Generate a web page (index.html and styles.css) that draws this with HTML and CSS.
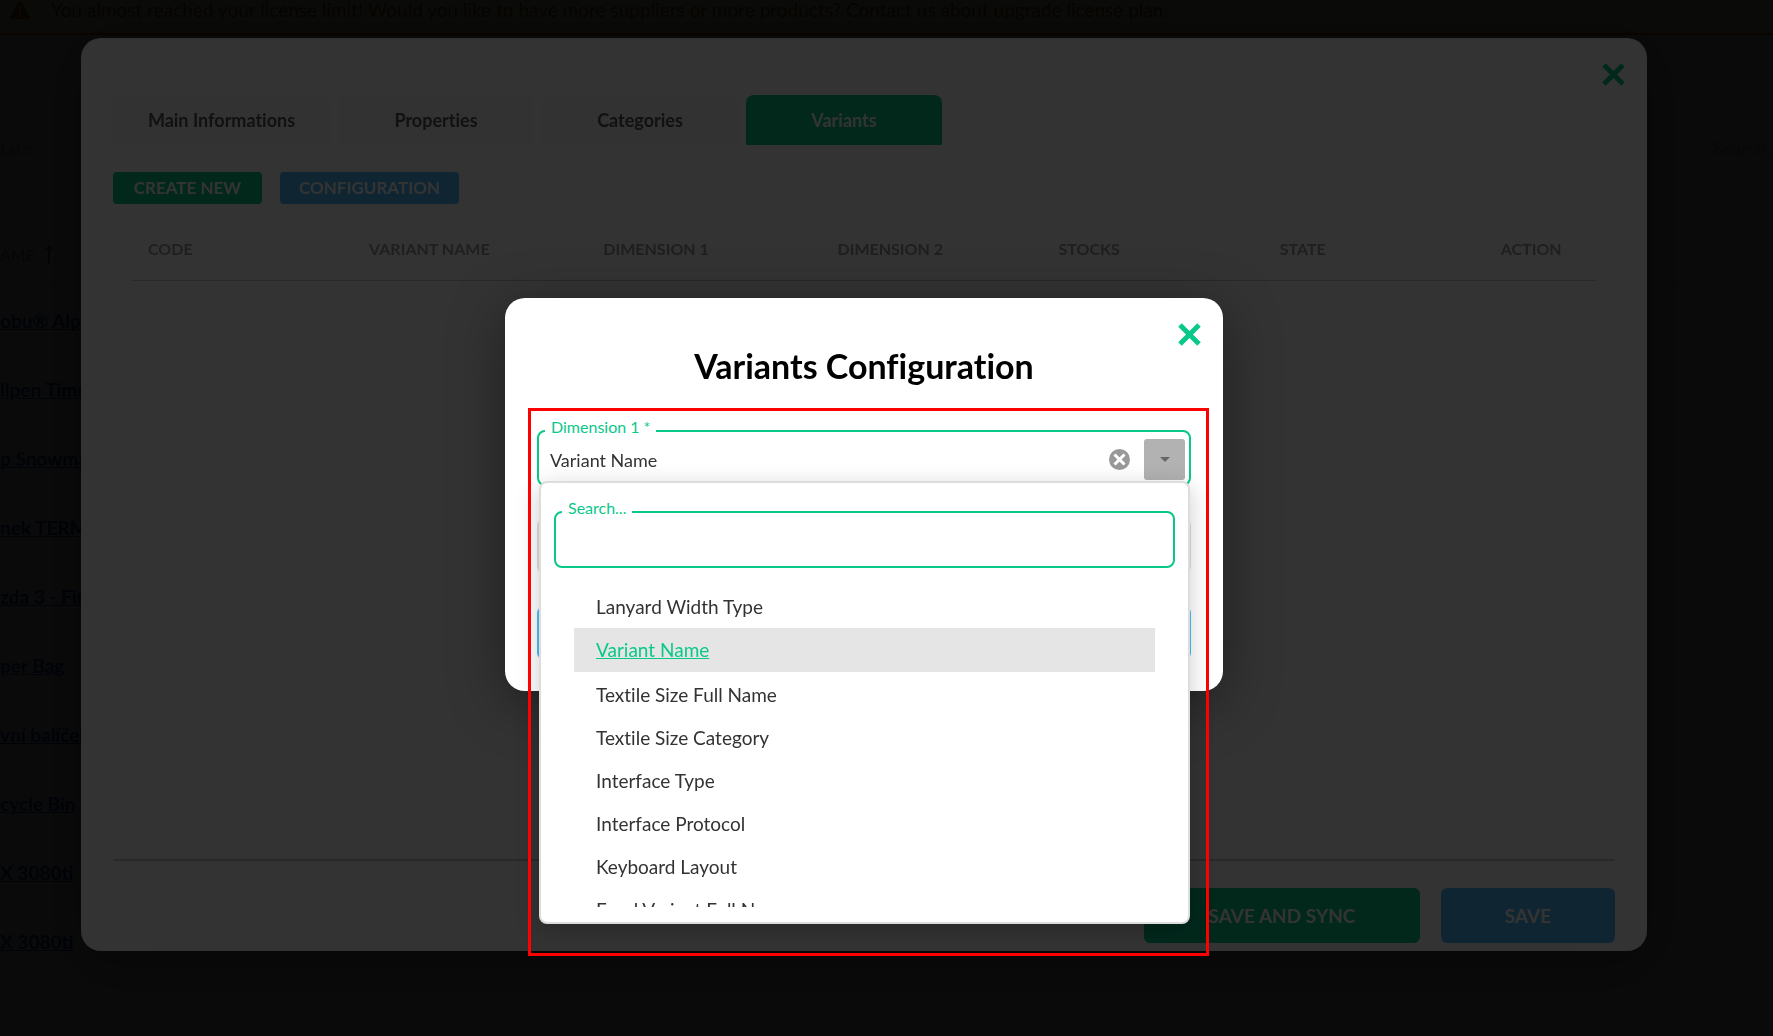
FILE: index.html
```
<!DOCTYPE html>
<html lang="en">
<head>
<meta charset="utf-8">
<meta name="viewport" content="width=device-width, initial-scale=1">
<title>Variants Configuration</title>
<link rel="stylesheet" href="styles.css">
</head>
<body>
<div class="page">
  <div class="license-banner">
    <svg class="warn-icon" viewBox="0 0 20 18" aria-hidden="true"><path fill-rule="evenodd" d="M10 0c.6 0 1 .3 1.300.8l8.500 14.700c.6 1.100-.1 2.500-1.400 2.500H1.600c-1.300 0-2-1.400-1.400-2.500L8.700.8C9 .3 9.400 0 10 0zM9 5.500l.3 6h1.400l.3-6zM10 13a1.200 1.200 0 1 0 0 2.400 1.200 1.200 0 0 0 0-2.400z"/></svg>
    <span>You almost reached your license limit! Would you like to have more suppliers or more products? Contact us about upgrade license plan.</span>
  </div>
  <div class="page-bar"></div>
  <div class="filters">
    <span class="filter-state">tate</span>
    <input class="filter-search" type="search" placeholder="Search..." aria-label="Search products">
  </div>
  <div class="products">
    <div class="products-head">AME
      <svg class="sort-icon" viewBox="0 0 8 20" aria-hidden="true"><path d="M4 1v18M1 5l3-4 3 4"/></svg>
    </div>
    <a class="product" href="#">obu® Alpine</a>
    <a class="product" href="#">llpen Timmy</a>
    <a class="product" href="#">p Snowman</a>
    <a class="product" href="#">nek TERMO</a>
    <a class="product" href="#">zda 3 - First</a>
    <a class="product" href="#">per Bag</a>
    <a class="product" href="#">vní balíček</a>
    <a class="product" href="#">cycle Bin</a>
    <a class="product" href="#">X 3080ti</a>
    <a class="product" href="#">X 3080ti</a>
  </div>
</div>

<div class="overlay">
  <section class="dialog product-dialog" aria-label="Product">
    <button class="close" type="button" aria-label="Close">
      <svg viewBox="0 0 23 23" aria-hidden="true"><path d="M2 2l19 19M21 2L2 21"/></svg>
    </button>
    <nav class="tabs">
      <button class="tab" type="button">Main Informations</button>
      <button class="tab" type="button">Properties</button>
      <button class="tab" type="button">Categories</button>
      <button class="tab tab-active" type="button">Variants</button>
    </nav>
    <div class="toolbar">
      <button class="tool tool-create green" type="button">CREATE NEW</button>
      <button class="tool tool-config blue" type="button">CONFIGURATION</button>
    </div>
    <table class="variants">
      <colgroup><col class="c-mid"><col class="c-wide"><col class="c-wide"><col class="c-mid"><col class="c-mid"><col class="c-mid"><col></colgroup>
      <thead>
        <tr><th>CODE</th><th>VARIANT NAME</th><th>DIMENSION 1</th><th>DIMENSION 2</th><th>STOCKS</th><th>STATE</th><th>ACTION</th></tr>
      </thead>
    </table>
    <footer class="dialog-footer">
      <button class="save save-sync green" type="button">SAVE AND SYNC</button>
      <button class="save blue" type="button">SAVE</button>
    </footer>
  </section>
</div>

<div class="overlay overlay-center">
  <section class="dialog config-dialog" role="dialog" aria-labelledby="config-title">
    <button class="close" type="button" aria-label="Close">
      <svg viewBox="0 0 23 23" aria-hidden="true"><path d="M2 2l19 19M21 2L2 21"/></svg>
    </button>
    <h1 id="config-title" class="config-title">Variants Configuration</h1>
    <div class="field">
      <label class="field-label" for="dim1">Dimension 1 *</label>
      <input id="dim1" class="field-input" type="text" value="Variant Name" readonly>
      <button class="clear" type="button" aria-label="Clear">
        <svg viewBox="0 0 21 21" aria-hidden="true"><circle cx="10.500" cy="10.500" r="10.500"/><path d="M5.500 5.500l10 10M15.500 5.500l-10 10"/></svg>
      </button>
      <button class="toggle" type="button" aria-label="Open list">
        <svg viewBox="0 0 10 5" aria-hidden="true"><path d="M0 0h10L5 5z"/></svg>
      </button>
      <div class="dropdown">
        <div class="field search">
          <label class="field-label" for="find">Search...</label>
          <input id="find" class="field-input" type="text">
        </div>
        <ul class="options" role="listbox" aria-label="Dimension 1">
          <li role="option">Lanyard Width Type</li>
          <li role="option" class="selected" aria-selected="true">Variant Name</li>
          <li role="option">Textile Size Full Name</li>
          <li role="option">Textile Size Category</li>
          <li role="option">Interface Type</li>
          <li role="option">Interface Protocol</li>
          <li role="option">Keyboard Layout</li>
          <li role="option">Food Variant Full Name</li>
        </ul>
      </div>
    </div>
    <div class="field field-idle">
      <input class="field-input" type="text" aria-label="Second dimension">
    </div>
    <button class="confirm blue" type="button" aria-label="Save"></button>
    <div class="highlight"></div>
  </section>
</div>
</body>
</html>
```
FILE: styles.css
```
* { box-sizing: border-box; }
body {
  margin: 0;
  min-height: 100vh;
  overflow: hidden;
  background: #fafafa;
  color: #333;
  font: 18px/24px Lato, "Noto Sans", sans-serif;
  font-variant-ligatures: none;
}
button, input { font: inherit; font-variant-ligatures: none; color: inherit; }
button { border: 0; padding: 0; cursor: pointer; }
.green { background: #0ac88a; }
.blue { background: #4bbff7; }

/* Product list behind the dialogs */
.page { height: 100vh; overflow: hidden; }
.license-banner {
  display: flex;
  align-items: center;
  gap: 21px;
  height: 35px;
  padding: 0 10px 14px;
  border-bottom: 2px solid #f57c00;
  background: #fffbe0;
  color: #9c6200;
  font-size: 19px;
  line-height: 19px;
}
.warn-icon { width: 20px; height: 20px; fill: #b56c00; }
.page-bar { height: 28px; border-bottom: 1px solid #eee; }
.filters {
  display: flex;
  justify-content: space-between;
  align-items: center;
  height: 169px;
}
.filter-state { color: #aaa; }
.filter-search {
  width: 120px;
  height: 58px;
  margin-right: -45px;
  padding: 0 14px;
  border: 1px solid #ddd;
  border-radius: 6px;
  background: #fff;
}
.filter-search::placeholder { color: #aaa; }
.products-head {
  display: flex;
  align-items: center;
  gap: 10px;
  height: 55px;
  padding-bottom: 8px;
  border-bottom: 1px solid #ddd;
  font-size: 16px;
  color: #888;
}
.sort-icon { width: 8px; height: 20px; fill: none; stroke: #666; stroke-width: 2; }
.product {
  display: block;
  height: 69px;
  line-height: 68px;
  border-bottom: 1px solid #eee;
  color: #0048b4;
  font-size: 19px;
  font-weight: 700;
  text-decoration: underline;
}

/* Dialogs */
.overlay {
  position: fixed;
  inset: 0;
  display: flex;
  padding: 38px 126px 85px 81px;
  background: rgba(0, 0, 0, .8);
}
.overlay-center { align-items: center; justify-content: center; }
.dialog {
  position: relative;
  display: flex;
  flex-direction: column;
  border-radius: 20px;
  background: #fff;
  box-shadow: 0 12px 56px rgba(0, 0, 0, .38);
}
.close {
  position: absolute;
  top: 25px;
  right: 22px;
  width: 23px;
  height: 23px;
  background: none;
}
.close svg { display: block; width: 23px; height: 23px; fill: none; stroke: #0ac88a; stroke-width: 5; }

.product-dialog { flex: 1; padding: 57px 32px 8px; }
.tabs { display: flex; gap: 8px; }
.tab {
  min-width: 196px;
  height: 50px;
  padding: 0 34px;
  border-radius: 8px 8px 0 0;
  background: #f7f7f7;
  color: #555;
  font-weight: 700;
}
.tab:first-child { width: 217px; padding: 0; }
.tab-active { background: #0ac88a; color: #fff; }
.toolbar { display: flex; gap: 18px; margin-top: 27px; }
.tool { height: 32px; border-radius: 4px; color: #fff; font-size: 17px; font-weight: 700; }
.tool-create { width: 149px; }
.tool-config { width: 179px; }
.variants {
  margin: 14px 19px 0;
  border-spacing: 0;
  table-layout: fixed;
  color: #999;
}
.c-mid { width: 15.1%; }
.c-wide { width: 16%; }
.variants th {
  height: 63px;
  padding: 0 16px;
  border-bottom: 1px solid #ccc;
  text-align: left;
  font-size: 16px;
  font-weight: 700;
}
.dialog-footer {
  display: flex;
  justify-content: flex-end;
  gap: 21px;
  margin-top: auto;
  padding-top: 27px;
  border-top: 2px solid #ccc;
}
.save { width: 174px; height: 55px; border-radius: 6px; color: #fff; font-size: 19px; font-weight: 700; }
.save-sync { width: 276px; }

.config-dialog { width: 718px; padding: 48px 32px 32px; }
.config-title {
  margin: 0 0 44px;
  color: #000;
  font-size: 34px;
  line-height: 40px;
  font-weight: 700;
  text-align: center;
}
.field {
  position: relative;
  display: flex;
  align-items: center;
  height: 56px;
  padding: 3px 4px 0 11px;
  border: 2px solid #0ac88a;
  border-radius: 8px;
  background: #fff;
}
.search { height: 57px; }
.field-label {
  position: absolute;
  top: -17px;
  left: 6px;
  padding: 0 6px;
  background: #fff;
  color: #0ac88a;
  font-size: 16px;
}
.field-input { flex: 1; min-width: 0; padding: 0; border: 0; outline: 0; background: none; }
.clear { width: 21px; height: 21px; margin-right: 14px; background: none; }
.clear svg { display: block; width: 21px; height: 21px; fill: #999; stroke: #fff; stroke-width: 3; }
.clear circle { stroke: none; }
.toggle {
  display: grid;
  place-items: center;
  width: 41px;
  height: 41px;
  border-radius: 3px;
  background: #b2b2b2;
}
.toggle svg { width: 10px; height: 5px; fill: #666; }
.field-idle { margin-top: 32px; border-color: #ddd; }
.confirm { height: 52px; margin-top: 33px; border-radius: 6px; }

.dropdown {
  position: absolute;
  z-index: 1;
  top: 49px;
  left: 0;
  right: -1px;
  padding: 28px 13px 15px;
  border: 2px solid #ddd;
  border-radius: 8px;
  background: #fff;
  box-shadow: 0 6px 24px rgba(0, 0, 0, .2);
}
.options {
  height: 322px;
  margin: 17px 20px 0;
  padding: 0;
  overflow: hidden;
  list-style: none;
  font-size: 19px;
  line-height: 43px;
}
.options li { padding: 0 22px; }
.options .selected {
  margin-bottom: 1px;
  background: #e5e5e5;
  color: #0ac88a;
  line-height: 44px;
  text-decoration: underline;
}

/* Annotation frame round the dimension picker */
.highlight {
  position: absolute;
  z-index: 2;
  top: 110px;
  left: 23px;
  right: 14px;
  height: 548px;
  border: 3px solid #f00;
  pointer-events: none;
}
```
